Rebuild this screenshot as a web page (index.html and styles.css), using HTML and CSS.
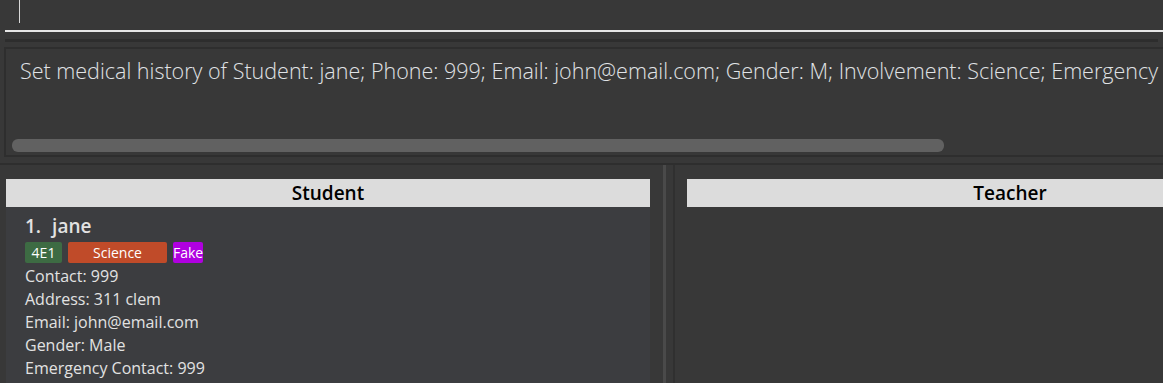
FILE: index.html
```html
<!DOCTYPE html>
<html lang="en">
<head>
  <meta charset="UTF-8" />
  <title>Address Book</title>
  <link rel="stylesheet" href="styles.css">
</head>
<body>

  <div class="command-box">
    <div class="command-input"><span class="caret"></span></div>
  </div>

  <div class="result-wrap">
    <div class="result-box">
      <div class="result-text">Set medical history of Student: jane; Phone: 999; Email: john@email.com; Gender: M; Involvement: Science; Emergency Contact: 999; Address: 311 clem</div>
      <div class="scroll-track"><div class="scroll-thumb"></div></div>
    </div>
  </div>

  <div class="panels">
    <div class="panel student-panel">
      <div class="panel-header">Student</div>
      <div class="panel-list">
        <div class="card">
          <div class="card-name"><span class="card-index">1.</span>jane</div>
          <div class="tags">
            <span class="tag tag-class">4E1</span>
            <span class="tag tag-cca">Science</span>
            <span class="tag tag-fake">Fake</span>
          </div>
          <div class="card-field">Contact: 999</div>
          <div class="card-field">Address: 311 clem</div>
          <div class="card-field">Email: john@email.com</div>
          <div class="card-field">Gender: Male</div>
          <div class="card-field">Emergency Contact: 999</div>
        </div>
      </div>
    </div>

    <div class="divider"></div>

    <div class="panel teacher-panel">
      <div class="panel-header">Teacher</div>
      <div class="panel-list empty"></div>
    </div>
  </div>

</body>
</html>
```

FILE: styles.css
```css
body {
  margin: 0;
  background: #383838;
  font-family: "Open Sans", sans-serif;
  width: 1163px;
  height: 383px;
  overflow: hidden;
}

.command-box {
  padding: 0 0 0 5px;
  border-bottom: 7px solid #383838;
  box-shadow: 0 8px 0 -5px #2d2d2d;
}

.command-input {
  height: 30px;
  border-bottom: 2px solid #e6e6e6;
  padding-left: 14px;
}

.caret {
  display: inline-block;
  width: 1px;
  height: 23px;
  background: #d8d8d8;
}

.result-wrap {
  margin-top: 8px;
  padding: 0 0 6px 4px;
  border-bottom: 2px solid #2e2e2e;
}

.result-box {
  border: 2px solid #2e2e2e;
  border-right: none;
  background: #383838;
  height: 106px;
  overflow: hidden;
}

.result-text {
  color: #e0e3e6;
  font-size: 21.5px;
  font-weight: 300;
  white-space: nowrap;
  padding: 7px 0 0 14px;
  height: 83px;
}

.scroll-track {
  padding: 0 6px;
}

.scroll-thumb {
  width: 932px;
  height: 13px;
  background: #616161;
  border-radius: 6px;
}

.panels {
  display: flex;
  height: 218px;
  overflow: hidden;
}

.panel {
  padding-top: 14px;
  display: flex;
  flex-direction: column;
  flex: none;
}

.student-panel {
  width: 644px;
  padding-left: 6px;
  padding-right: 13px;
}

.divider {
  flex: none;
  width: 3px;
  background: #4a4a4a;
}

.teacher-panel {
  width: 646px;
  margin-left: 7px;
  padding-left: 12px;
  border-left: 2px solid #303030;
}

.panel-header {
  background: #dcdcdc;
  color: #000;
  font-weight: 600;
  font-size: 19px;
  text-align: center;
  height: 28px;
  line-height: 28px;
}

.panel-list {
  flex: 1;
  background: #3c3d40;
}

.panel-list.empty {
  background: #383838;
}

.card {
  padding: 6px 0 0 19px;
  color: #e2e2e2;
}

.card-name {
  font-size: 19px;
  font-weight: 600;
  line-height: 26px;
}

.card-index {
  margin-right: 11px;
}

.tags {
  display: flex;
  gap: 6px;
  margin-top: 3px;
  margin-bottom: 2px;
}

.tag {
  font-size: 14px;
  height: 21px;
  line-height: 21px;
  border-radius: 2px;
  color: #fff;
  text-align: center;
}

.tag-class {
  background: #3d6b43;
  width: 37px;
}

.tag-cca {
  background: #c04b29;
  width: 99px;
}

.tag-fake {
  background: #b000e0;
  width: 30px;
}

.card-field {
  font-size: 16px;
  line-height: 23px;
}
```
